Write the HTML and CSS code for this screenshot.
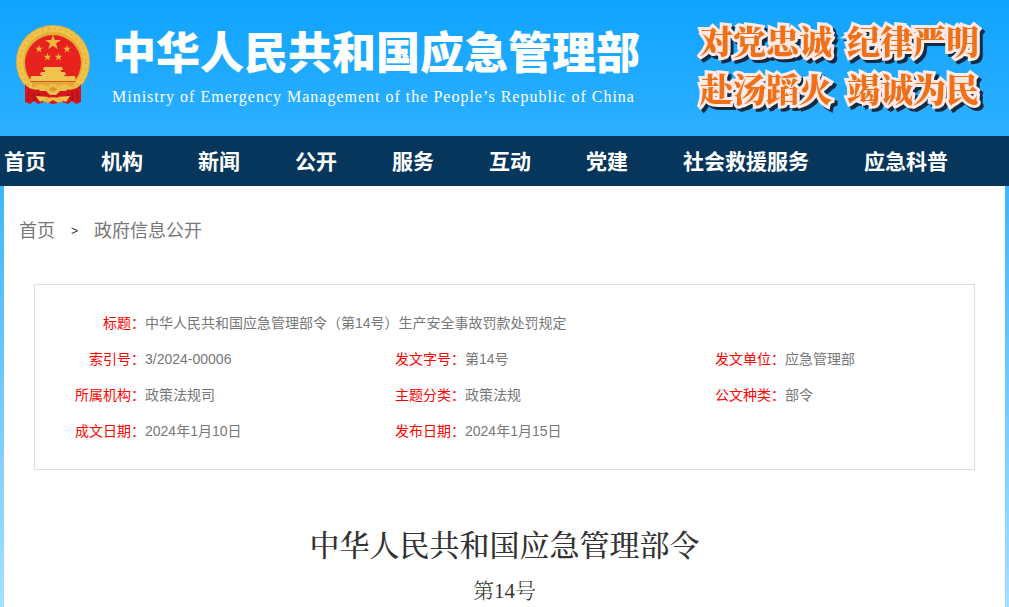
FILE: index.html
```html
<!DOCTYPE html>
<html lang="zh-CN">

<head>
    <meta charset="utf-8" />
    <meta name="viewport" content="width=device-width, initial-scale=1.0" />
    <title>中华人民共和国应急管理部</title>
    <link rel="stylesheet" href="styles.css">
</head>

<body>
    <header class="header">
        <svg class="emblem" viewBox="0 0 76 80" width="76" height="80" aria-hidden="true">
            <circle cx="38" cy="37" r="37" fill="#e3ae36" />
            <circle cx="38" cy="37" r="33" fill="none" stroke="#f0c44c" stroke-width="6" />
            <circle cx="38" cy="37" r="33" fill="none" stroke="#e6b13b" stroke-width="2" stroke-dasharray="2 4" />
            <circle cx="38" cy="38" r="28" fill="#e8231f" />
            <g fill="#efb93b">
                <path d="M38 9.500l1.800 5.500h6l-4.800 3.600 1.800 5.700-4.800-3.500-4.800 3.500 1.800-5.700-4.800-3.600h6z" />
                <path d="M24 20l.9 2.800h2.900l-2.300 1.700.9 2.900-2.400-1.800-2.400 1.800.9-2.900-2.300-1.700h2.900z" />
                <path d="M52 20l.9 2.800h2.900l-2.300 1.700.9 2.900-2.400-1.800-2.400 1.800.9-2.900-2.300-1.700h2.900z" />
                <path d="M32.500 28l.9 2.800h2.900l-2.300 1.700.9 2.900-2.400-1.800-2.400 1.800.9-2.900-2.300-1.700h2.900z" />
                <path d="M43.500 28l.9 2.800h2.900l-2.300 1.700.9 2.900-2.400-1.800-2.400 1.800.9-2.900-2.300-1.700h2.900z" />
            </g>
            <!-- gate tower -->
            <path d="M29 42h18l1 3h-20z M30 45h16v2h-16z M26 47h24l1 3h-26z M27 50h22v2h-22z M16 51h44l1 5h-46z" fill="#f0c250" />
            <path d="M17 57h42v5h-42z" fill="#e2a836" />
            <path d="M15 56h46v1h-46z" fill="#d8531f" />
            <!-- red drapery -->
            <path d="M10 59c4 6 12 7 19 4l9 6 9-6c7 3 15 2 19-4v18l-5 2-4-3-4 3-6-2-9 2-9-2-6 2-4-3-4 3-5-2z" fill="#d3171b" />
            <path d="M14 65l-1 11M19 67l-1 9M24 68l-5 8M62 65l1 11M57 67l1 9M52 68l5 8" stroke="#a01216" stroke-width="1" fill="none" />
            <path d="M21 61c5-3 9-1 12 1l2-3h6l2 3c3-2 7-4 12-1l-4 5h-6l-4 4h-6l-4-4h-6z" fill="#efbd48" />
            <path d="M34 65c1-4 7-4 8 0l-4 2z" fill="#d8982c" />
            <path d="M21 71l13 1-9 5zM55 71l-13 1 9 5z" fill="#f2c84f" />
            <path d="M27 76c5-5 17-5 22 0l-6 2-5-3-5 3z" fill="#efbd48" />
        </svg>
        <div class="brand">
            <h1 class="brand-cn">中华人民共和国应急管理部</h1>
            <p class="brand-en">Ministry of Emergency Management of the People’s Republic of China</p>
        </div>
        <div class="slogan">
            <span>对党忠诚</span>
            <span>纪律严明</span>
            <span>赴汤蹈火</span>
            <span>竭诚为民</span>
        </div>
    </header>

    <nav class="nav">
        <ul class="nav-list">
            <li><a href="#">首页</a></li>
            <li><a href="#">机构</a></li>
            <li><a href="#">新闻</a></li>
            <li><a href="#">公开</a></li>
            <li><a href="#">服务</a></li>
            <li><a href="#">互动</a></li>
            <li><a href="#">党建</a></li>
            <li><a href="#">社会救援服务</a></li>
            <li><a href="#">应急科普</a></li>
        </ul>
    </nav>

    <main class="content">
        <div class="breadcrumb">
            <a href="#">首页</a>
            <span class="arrow">&gt;</span>
            <a href="#">政府信息公开</a>
        </div>

        <div class="info">
            <table class="info-table">
                <colgroup>
                    <col class="col-label"><col class="col-value">
                    <col class="col-label"><col class="col-value">
                    <col class="col-label"><col>
                </colgroup>
                <tr>
                    <th scope="row">标题：</th>
                    <td colspan="5">中华人民共和国应急管理部令（第14号）生产安全事故罚款处罚规定</td>
                </tr>
                <tr>
                    <th scope="row">索引号：</th>
                    <td>3/2024-00006</td>
                    <th scope="row">发文字号：</th>
                    <td>第14号</td>
                    <th scope="row">发文单位：</th>
                    <td>应急管理部</td>
                </tr>
                <tr>
                    <th scope="row">所属机构：</th>
                    <td>政策法规司</td>
                    <th scope="row">主题分类：</th>
                    <td>政策法规</td>
                    <th scope="row">公文种类：</th>
                    <td>部令</td>
                </tr>
                <tr>
                    <th scope="row">成文日期：</th>
                    <td>2024年1月10日</td>
                    <th scope="row">发布日期：</th>
                    <td colspan="3">2024年1月15日</td>
                </tr>
            </table>
        </div>

        <article class="article">
            <h2>中华人民共和国应急管理部令</h2>
            <p>第14号</p>
        </article>
    </main>
</body>

</html>
```
FILE: styles.css
```css
* {
    box-sizing: border-box;
}

html {
    min-height: 100%;
    background: linear-gradient(#10a4ff, #27adff 18%, #45b8ff 35%, #a6dfff);
}

body {
    margin: 0;
    font-family: "Liberation Sans", "Noto Sans CJK SC", sans-serif;
    color: #333;
}

h1,
h2,
p,
ul {
    margin: 0;
    padding: 0;
}

a {
    color: inherit;
    text-decoration: none;
}

.header,
.nav-list,
.content {
    max-width: 1001px;
    margin: 0 auto;
}

/* header */
.header {
    display: flex;
    align-items: flex-start;
    height: 136px;
    padding: 16px 26px 0 11px;
}

.emblem {
    flex: none;
    margin-top: 9px;
}

.brand {
    flex: 1;
    margin-left: 21px;
    color: #fff;
    white-space: nowrap;
}

.brand-cn {
    font-family: "Noto Sans CJK SC", sans-serif;
    font-size: 44px;
    font-weight: 900;
    line-height: 68px;
}

.brand-en {
    font-family: "Liberation Serif", serif;
    font-size: 16px;
    line-height: 26px;
    letter-spacing: 1px;
}

.slogan {
    display: grid;
    grid-template-columns: auto auto;
    column-gap: 15px;
    font-family: "Noto Serif CJK SC", "Noto Sans CJK SC", serif;
    font-size: 33px;
    font-weight: 800;
    line-height: 48px;
    color: #f07018;
    -webkit-text-stroke: 6px #ffeae8;
    paint-order: stroke fill;
    filter: drop-shadow(3px 3px 0 #102c44);
    white-space: nowrap;
}

/* navigation */
.nav {
    background: #06365c;
}

.nav-list {
    display: flex;
    gap: 55px;
    padding-top: 2px;
    list-style: none;
    font-size: 21px;
    font-weight: bold;
    line-height: 48px;
    color: #fff;
    white-space: nowrap;
}

/* page */
.content {
    min-height: calc(100vh - 186px);
    padding: 30px 30px 0;
    background: #fff;
}

.breadcrumb {
    display: flex;
    align-items: center;
    gap: 16px;
    margin-left: -15px;
    font-size: 18px;
    line-height: 30px;
    color: #777;
}

.arrow {
    font-size: 12px;
    color: #333;
}

.info {
    margin-top: 38px;
    padding: 20px 0;
    border: 1px solid #ddd;
}

.info-table {
    width: 100%;
    table-layout: fixed;
    border-collapse: collapse;
    font-size: 14px;
    line-height: 36px;
    color: #777;
}

.info-table th,
.info-table td {
    height: 36px;
    padding: 0;
    text-align: left;
    font-weight: normal;
}

.info-table th {
    text-align: right;
    color: #f00;
}

.col-label {
    width: 110px;
}

.col-value {
    width: 210px;
}

.article {
    margin-top: 50px;
    text-align: center;
    font-family: "Liberation Serif", "Noto Serif CJK SC", "Noto Sans CJK SC", serif;
}

.article h2 {
    font-size: 30px;
    font-weight: 500;
    line-height: 52px;
}

.article p {
    padding-top: 4px;
    font-size: 21px;
    font-weight: 300;
    line-height: 30px;
}
```
